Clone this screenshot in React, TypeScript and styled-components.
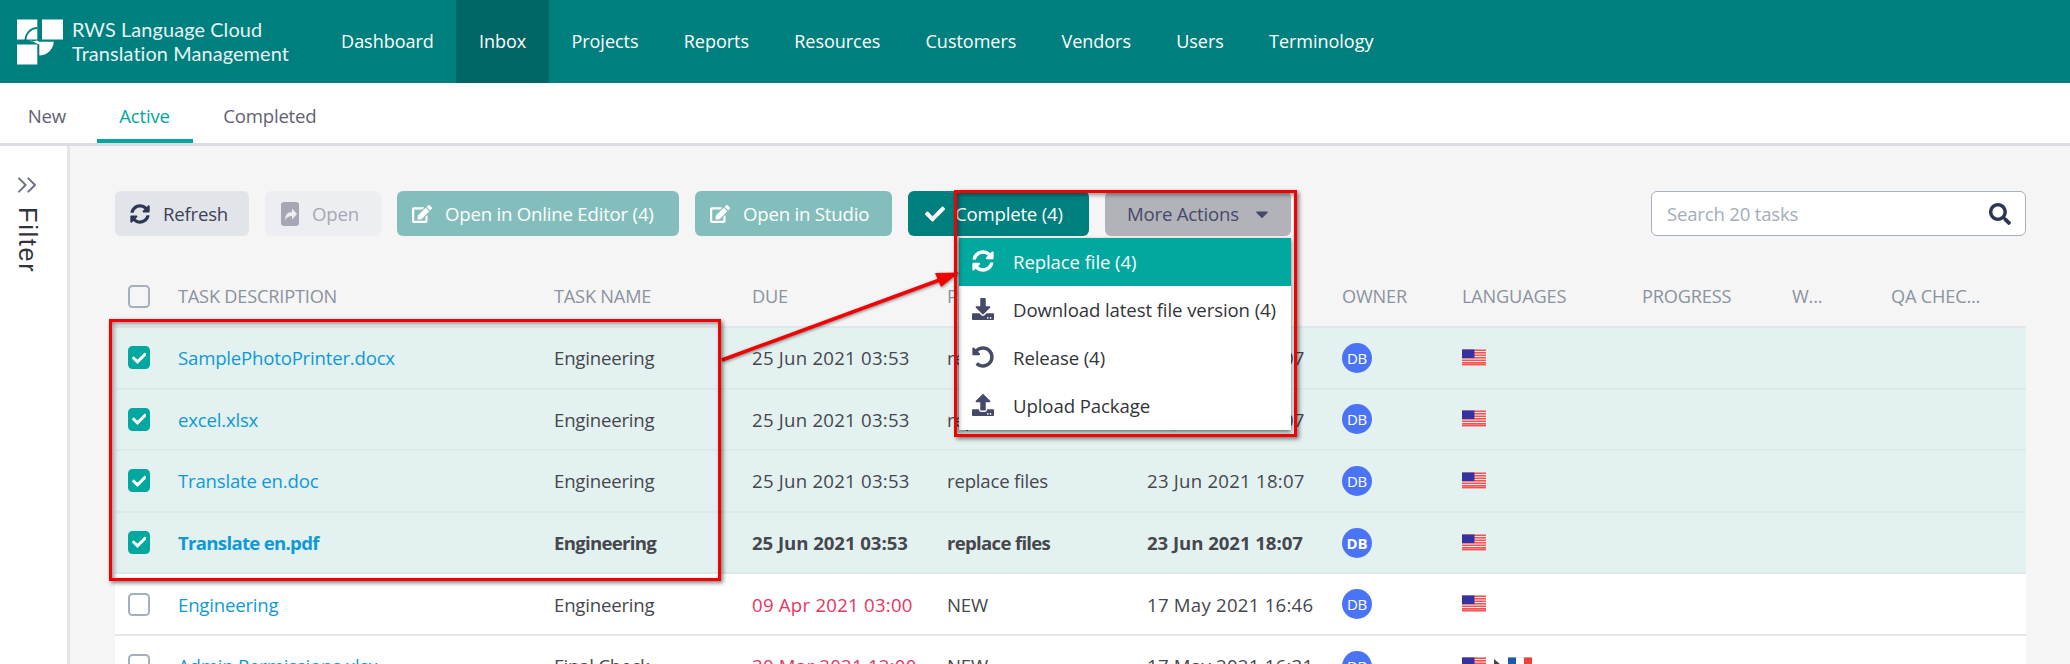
import React from "react";
import styled, { createGlobalStyle } from "styled-components";
import { FaSyncAlt, FaEdit, FaCheck, FaSearch, FaDownload, FaUndoAlt, FaUpload, FaCaretDown } from "react-icons/fa";
import { ChevronsRight } from "lucide-react";

const Global = createGlobalStyle`
  html, body { margin: 0; padding: 0; background: #fff; overflow: hidden; }
  body { font-family: "Open Sans", "Noto Sans", sans-serif; }
`;

const Page = styled.div`
  position: relative; width: 2070px; height: 664px; overflow: hidden;
  font-size: 18.6px; color: #45474d; letter-spacing: -0.2px;
`;
const TopBar = styled.header`
  height: 83px; background: #007f7f; display: flex; color: #fff;
`;
const Brand = styled.div`
  width: 318.5px; flex: none; display: flex; align-items: center; padding-left: 17px; gap: 9px; box-sizing: border-box;
`;
const BrandText = styled.div`
  font-family: Lato, sans-serif; font-size: 19.9px; line-height: 24px; letter-spacing: 0.1px; color: #e6f3f3; white-space: nowrap; margin-top: -1px;
`;
const NavItem = styled.div<{ $active?: boolean }>`
  padding: 0 22.6px; display: flex; align-items: center; font-size: 18px; letter-spacing: -0.02px; font-weight: 500;
  padding-bottom: 2px; box-sizing: border-box;
  background: ${(p) => (p.$active ? "#006666" : "transparent")};
`;
const SubNav = styled.nav`
  height: 60px; border-bottom: 3px solid #dcdde2; display: flex; gap: 8px; padding-left: 5px; box-sizing: content-box;
`;
const Tab = styled.div<{ $active?: boolean }>`
  padding: 0 22.7px; display: flex; align-items: center; padding-top: 8px; box-sizing: border-box;
  color: ${(p) => (p.$active ? "#00a89f" : "#5f6273")};
  border-bottom: 4px solid ${(p) => (p.$active ? "#00a89f" : "transparent")};
`;
const Body = styled.div`
  display: flex; height: 518px;
`;
const Side = styled.aside`
  width: 70px; flex: none; box-sizing: border-box; border-right: 3px solid #e3e5ea; background: #fff;
  padding: 23px 0 0 11px; display: flex; flex-direction: column; gap: 6px; align-items: flex-start;
`;
const FilterLabel = styled.div`
  writing-mode: vertical-rl; font-family: "Liberation Sans", sans-serif; font-size: 25.5px; letter-spacing: 1.6px; color: #33343b; line-height: 24px; margin-left: 5px;
`;
const Main = styled.main`
  flex: 1; background: #f5f5f5; padding: 45px 44px 0 45px; min-width: 0;
`;
const Toolbar = styled.div`
  display: flex; gap: 16px; height: 45px; margin-bottom: 33px; align-items: stretch;
`;
const Btn = styled.div<{ $w: number; $bg: string; $fg: string; $gap?: number; $pad?: number }>`
  width: ${(p) => p.$w}px; background: ${(p) => p.$bg}; color: ${(p) => p.$fg}; border-radius: 6px; flex: none;
  display: flex; align-items: center; box-sizing: border-box; padding-left: ${(p) => p.$pad ?? 15}px; gap: ${(p) => p.$gap ?? 13}px; white-space: nowrap;
  svg { font-size: 20px; flex: none; }
`;
const MoreWrap = styled.div`
  position: relative; display: flex;
`;
const Menu = styled.div`
  position: absolute; z-index: 3; left: -146px; top: 47px; width: 332px; height: 192px; background: #fff;
  box-shadow: 0 2px 4px rgba(0,0,0,.55); color: #33343b; letter-spacing: -0.1px;
`;
const MenuItem = styled.div<{ $active?: boolean }>`
  height: 48px; display: flex; align-items: center; padding: 0 0 2px 13px; gap: 19px; white-space: nowrap; box-sizing: border-box;
  background: ${(p) => (p.$active ? "#00a89f" : "transparent")};
  color: ${(p) => (p.$active ? "#fff" : "#33343b")};
  svg { font-size: 22px; width: 22px; flex: none; color: ${(p) => (p.$active ? "#fff" : "#454a68")}; }
`;
const Search = styled.div`
  margin-left: auto; width: 375px; box-sizing: border-box; border: 1.5px solid #a5afbd; border-radius: 6px; background: #fff;
  display: flex; align-items: center; padding: 0 14px 0 15px; color: #a3adba; justify-content: space-between;
  svg { font-size: 22px; color: #2f3555; }
`;
const cols = "63px 376px 198px 195px 200px 195px 120px 180px 150px 99px 135px";
const HeadRow = styled.div`
  display: grid; grid-template-columns: ${cols}; height: 59px; padding-bottom: 3px; align-items: center; box-sizing: border-box;
  border-bottom: 2px solid #e1e6ea; color: #8a93a0; text-transform: uppercase; font-size: 18.2px; white-space: nowrap; letter-spacing: -0.2px;
`;
const Row = styled.div<{ $sel?: boolean; $bold?: boolean }>`
  display: grid; grid-template-columns: ${cols}; height: 61.6px; align-items: center; box-sizing: border-box;
  background: ${(p) => (p.$sel ? "#e3f1f0" : "#fff")};
  border-bottom: 2px solid ${(p) => (p.$sel ? "#dbe9e8" : "#e3e7ea")};
  font-weight: ${(p) => (p.$bold ? 700 : 400)}; white-space: nowrap;
  letter-spacing: ${(p) => (p.$bold ? "-0.7px" : "-0.2px")};
`;
const CheckCell = styled.div`
  padding-left: 13px; display: flex; align-items: center;
`;
const Check = styled.div<{ $on?: boolean }>`
  width: 22px; height: 23px; box-sizing: border-box; border-radius: 4.5px; display: flex; align-items: center; justify-content: center;
  border: 2px solid ${(p) => (p.$on ? "#00a89f" : "#a5b0bd")};
  background: ${(p) => (p.$on ? "#00a89f" : "#fff")};
  color: #fff; font-size: 14.5px;
`;
const HeadCheck = styled(Check)`
  background: transparent;
`;
const LinkText = styled.div`
  color: #0f9ad6;
`;
const DateText = styled.div<{ $bold?: boolean }>`
  letter-spacing: ${(p) => (p.$bold ? "-0.05px" : "0.25px")};
`;
const Due = styled(DateText)<{ $late?: boolean }>`
  color: ${(p) => (p.$late ? "#e8355f" : "inherit")};
`;
const Avatar = styled.div`
  width: 30px; height: 30px; border-radius: 50%; background: #4a74f5; color: #fff; font-size: 15px; display: flex; align-items: center; justify-content: center; letter-spacing: -0.2px;
`;
const Langs = styled.div`
  display: flex; align-items: center; gap: 7px; margin-top: -1px; font-size: 0;
`;
const Frame = styled.div<{ $x: number; $y: number; $w: number; $h: number }>`
  position: absolute; z-index: 5; pointer-events: none; box-sizing: border-box;
  left: ${(p) => p.$x}px; top: ${(p) => p.$y}px; width: ${(p) => p.$w}px; height: ${(p) => p.$h}px;
  border: 3.5px solid #f40000;
  box-shadow: 2px 2px 4px rgba(0,0,0,.5), inset 2px 2px 4px rgba(0,0,0,.4);
`;
const ArrowLayer = styled.svg`
  position: absolute; z-index: 4; left: 0; top: 0; pointer-events: none; filter: drop-shadow(1.5px 1.5px 1.5px rgba(0,0,0,.45));
`;

const Logo = () => (
  <svg width="46" height="46" viewBox="17 18.5 46 46" style={{ flex: "none" }}>
    <path d="M17 19h20.3v20H17zM42 19h21v20H42zM17 44h20.3v20H17z" fill="#fff" />
    <path d="M39.3 41.3h14.4a14.4 14.4 0 0 1-14.4 13.7z" fill="#fff" />
    <path d="M25.5 39.5a12 12 0 0 1 12-12" fill="none" stroke="#007f7f" strokeWidth="1.8" />
    <path d="M28.5 39l3 2 6-1 3.5 3-2 1" fill="#fff" />
  </svg>
);

const OpenIcon = () => (
  <svg width="18" height="24" viewBox="0 0 18 24">
    <rect width="18" height="24" rx="3" fill="#a5a8b4" />
    <path d="M4 18c0-5 2.5-8 7-8V6.5l5 5.5-5 5.5V14c-3 0-5 1-7 4z" fill="#eceef1" />
  </svg>
);

const UsFlag = () => (
  <svg width="24" height="17" viewBox="0 0 24 17">
    <rect width="24" height="17" fill="#d9d9d9" />
    <rect y="0.5" width="24" height="16" fill="#fff" />
    {[0.5, 3, 5.5, 8, 10.5, 13].map((y) => <rect key={y} y={y} width="24" height="1.6" fill="#f4504f" />)}
    <rect y="14.6" width="24" height="1.8" fill="#f4504f" />
    <rect y="0.5" width="12.5" height="8.6" fill="#3332a0" />
  </svg>
);
const FrFlag = () => (
  <svg width="24" height="17" viewBox="0 0 24 17">
    <rect width="24" height="17" fill="#d9d9d9" />
    <rect y="0.5" width="8" height="16" fill="#1f5aa8" />
    <rect x="8" y="0.5" width="8" height="16" fill="#fff" />
    <rect x="16" y="0.5" width="8" height="16" fill="#ef4135" />
  </svg>
);
const Caret = () => (
  <svg width="8" height="12" viewBox="0 0 8 12"><path d="M1 0l7 6-7 6z" fill="#444" /></svg>
);

const rows = [
  { name: "SamplePhotoPrinter.docx", task: "Engineering", due: "25 Jun 2021 03:53", st: "replace files", at: "23 Jun 2021 18:07", sel: true },
  { name: "excel.xlsx", task: "Engineering", due: "25 Jun 2021 03:53", st: "replace files", at: "23 Jun 2021 18:07", sel: true },
  { name: "Translate en.doc", task: "Engineering", due: "25 Jun 2021 03:53", st: "replace files", at: "23 Jun 2021 18:07", sel: true },
  { name: "Translate en.pdf", task: "Engineering", due: "25 Jun 2021 03:53", st: "replace files", at: "23 Jun 2021 18:07", sel: true, bold: true },
  { name: "Engineering", task: "Engineering", due: "09 Apr 2021 03:00", st: "NEW", at: "17 May 2021 16:46", late: true },
  { name: "Admin Permissions.xlsx", task: "Final Check", due: "30 Mar 2021 12:00", st: "NEW", at: "17 May 2021 16:31", late: true, two: true },
];

export default function App() {
  return (
    <Page>
      <Global />
      <TopBar>
        <Brand>
          <Logo />
          <BrandText>RWS Language Cloud<br />Translation Management</BrandText>
        </Brand>
        {["Dashboard", "Inbox", "Projects", "Reports", "Resources", "Customers", "Vendors", "Users", "Terminology"].map((n) => (
          <NavItem key={n} $active={n === "Inbox"}>{n}</NavItem>
        ))}
      </TopBar>
      <SubNav>
        <Tab>New</Tab>
        <Tab $active>Active</Tab>
        <Tab>Completed</Tab>
      </SubNav>
      <Body>
        <Side>
          <ChevronsRight size={32} color="#6e7189" strokeWidth={1.5} />
          <FilterLabel>Filter</FilterLabel>
        </Side>
        <Main>
          <Toolbar>
            <Btn $w={134} $bg="#e1e5e9" $fg="#3d4158"><FaSyncAlt color="#2f3555" />Refresh</Btn>
            <Btn $w={116} $bg="#eceef1" $fg="#a5a8b4" $pad={16}><OpenIcon />Open</Btn>
            <Btn $w={282} $bg="#83bebc" $fg="#fff"><FaEdit />Open in Online Editor (4)</Btn>
            <Btn $w={197} $bg="#83bebc" $fg="#fff"><FaEdit />Open in Studio</Btn>
            <Btn $w={181} $bg="#007f7f" $fg="#fff" $pad={17} $gap={10}><FaCheck />Complete (4)</Btn>
            <MoreWrap>
              <Btn $w={186} $bg="#b1b3b8" $fg="#45496a" $pad={22} $gap={13}>More Actions<FaCaretDown /></Btn>
              <Menu>
                <MenuItem $active><FaSyncAlt />Replace file (4)</MenuItem>
                <MenuItem><FaDownload />Download latest file version (4)</MenuItem>
                <MenuItem><FaUndoAlt />Release (4)</MenuItem>
                <MenuItem><FaUpload />Upload Package</MenuItem>
              </Menu>
            </MoreWrap>
            <Search>Search 20 tasks<FaSearch /></Search>
          </Toolbar>
          <HeadRow>
            <CheckCell><HeadCheck /></CheckCell>
            <div>Task description</div>
            <div>Task name</div>
            <div>Due</div>
            <div>Phase</div>
            <div>Created</div>
            <div>Owner</div>
            <div>Languages</div>
            <div>Progress</div>
            <div>W...</div>
            <div>QA chec...</div>
          </HeadRow>
          {rows.map((r) => (
            <Row key={r.name} $sel={r.sel} $bold={r.bold}>
              <CheckCell><Check $on={r.sel}>{r.sel && <FaCheck />}</Check></CheckCell>
              <LinkText>{r.name}</LinkText>
              <div>{r.task}</div>
              <Due $late={r.late} $bold={r.bold}>{r.due}</Due>
              <div>{r.st}</div>
              <DateText $bold={r.bold}>{r.at}</DateText>
              <div><Avatar>DB</Avatar></div>
              <Langs><UsFlag />{r.two && <><Caret /><FrFlag /></>}</Langs>
            </Row>
          ))}
        </Main>
      </Body>
      <ArrowLayer width="2070" height="664" viewBox="0 0 2070 664">
        <path d="M722 360L945 278" stroke="#f40000" strokeWidth="3.5" />
        <path d="M959 272.5L935 273L941 287z" fill="#f40000" />
      </ArrowLayer>
      <Frame $x={954} $y={190} $w={343} $h={247} />
      <Frame $x={109} $y={319} $w={612} $h={262} />
    </Page>
  );
}
